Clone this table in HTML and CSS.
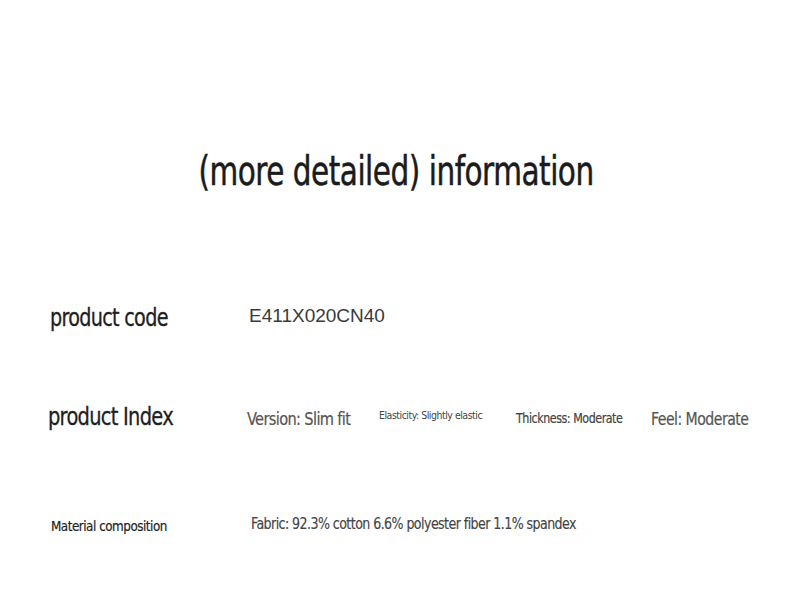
FILE: index.html
```html
<!DOCTYPE html>
<html>
<head>
<meta charset="utf-8">
<link rel="stylesheet" href="styles.css">
</head>
<body>
<div class="page">
  <div class="title-wrap"><h1 class="title">(more detailed) information</h1></div>
  <div class="row row-code">
    <div class="label-cell"><span class="label label-lg">product code</span></div>
    <div class="code">E411X020CN40</div>
  </div>
  <div class="row row-index">
    <div class="label-cell label-cell-index"><span class="label label-lg label-index">product Index</span></div>
    <div class="specs">
      <span class="spec spec-version">Version: Slim fit</span>
      <span class="spec spec-elastic">Elasticity: Slightly elastic</span>
      <span class="spec spec-thick">Thickness: Moderate</span>
      <span class="spec spec-feel">Feel: Moderate</span>
    </div>
  </div>
  <div class="row row-material">
    <div class="label-cell label-cell-sm"><span class="label label-sm">Material composition</span></div>
    <div class="fabric-cell"><span class="fabric">Fabric: 92.3% cotton 6.6% polyester fiber 1.1% spandex</span></div>
  </div>
</div>
</body>
</html>
```
FILE: styles.css
```css
html, body {
  margin: 0;
  padding: 0;
  background: #ffffff;
}
.page {
  width: 793px;
  height: 595px;
  font-family: "DejaVu Sans", sans-serif;
  font-stretch: condensed;
  color: #1f1f1f;
  display: flex;
  flex-direction: column;
  white-space: nowrap;
  overflow: hidden;
}
.title-wrap {
  margin-top: 147px;
  display: flex;
  justify-content: center;
}
.title {
  margin: 0;
  font-size: 41px;
  line-height: 48px;
  font-weight: normal;
  color: #1b1b1b;
  letter-spacing: -0.6px;
  transform: scaleX(0.8);
  -webkit-text-stroke: 0.5px #1b1b1b;
}
.row {
  display: flex;
  align-items: center;
}
.label-cell {
  width: 249px;
  padding-left: 50px;
  box-sizing: border-box;
  flex: none;
}
.label-cell-index {
  width: 247px;
  padding-left: 48px;
}
.label-cell-sm {
  width: 251px;
  padding-left: 51px;
}
.label {
  display: inline-block;
  color: #1f1f1f;
  transform-origin: left center;
}
.label-lg {
  font-size: 24px;
  line-height: 30px;
  letter-spacing: -0.8px;
  transform: scaleX(0.89);
  -webkit-text-stroke: 0.3px #1f1f1f;
}
.label-index {
  transform: scaleX(0.9);
}
.row-code {
  margin-top: 108px;
}
.code {
  font-family: "Liberation Sans", sans-serif;
  font-stretch: normal;
  font-size: 19px;
  color: #3a3a3a;
  letter-spacing: 0;
  margin-top: -4px;
}
.row-index {
  margin-top: 69px;
}
.specs {
  display: grid;
  grid-template-columns: 132px 137px 135px auto;
  align-items: center;
  color: #555555;
  margin-top: -2px;
}
.spec {
  display: inline-block;
  transform-origin: left center;
}
.spec-version {
  font-size: 18px;
  margin-top: 4px;
  letter-spacing: -0.7px;
  transform: scaleX(0.9);
  -webkit-text-stroke: 0.2px #555555;
}
.spec-elastic {
  font-size: 11px;
  margin-top: -2px;
  letter-spacing: -0.5px;
  transform: scaleX(0.95);
  color: #444444;
}
.spec-thick {
  font-size: 14px;
  margin-top: 3px;
  letter-spacing: -0.5px;
  transform: scaleX(0.88);
  -webkit-text-stroke: 0.2px #444444;
  color: #444444;
}
.spec-feel {
  font-size: 18px;
  margin-top: 5px;
  letter-spacing: -0.6px;
  transform: scaleX(0.87);
  -webkit-text-stroke: 0.2px #555555;
}
.row-material {
  margin-top: 84px;
}
.label-sm {
  font-size: 14px;
  letter-spacing: -0.5px;
  transform: scaleX(0.95);
  -webkit-text-stroke: 0.2px #1f1f1f;
}
.fabric-cell {
  margin-top: -4px;
}
.fabric {
  display: inline-block;
  font-size: 15px;
  color: #444444;
  letter-spacing: -0.6px;
  transform-origin: left center;
  transform: scaleX(0.935);
  -webkit-text-stroke: 0.15px #444444;
}
```
